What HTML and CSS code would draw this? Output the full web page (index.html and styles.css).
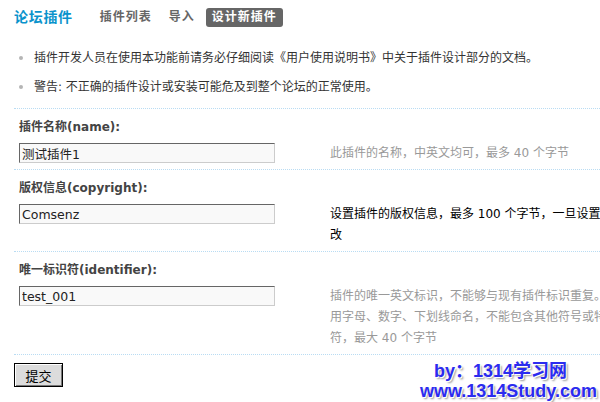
FILE: index.html
```html
<!DOCTYPE html>
<html lang="zh-CN">
<head>
<meta charset="utf-8">
<title>论坛插件</title>
<link rel="stylesheet" href="styles.css">
</head>
<body>
<div class="page">
  <div class="header">
    <h3 class="title">论坛插件</h3>
    <div class="tabs">
      <span class="tab">插件列表</span>
      <span class="tab">导入</span>
      <span class="tab active">设计新插件</span>
    </div>
  </div>
  <ul class="notes">
    <li>插件开发人员在使用本功能前请务必仔细阅读《用户使用说明书》中关于插件设计部分的文档。</li>
    <li>警告: 不正确的插件设计或安装可能危及到整个论坛的正常使用。</li>
  </ul>
  <div class="form">
    <div class="field">
      <div class="field-label">插件名称(name):</div>
      <div class="control"><input class="txt" type="text" value="测试插件1"></div>
      <div class="tip">此插件的名称，中英文均可，最多 40 个字节</div>
    </div>
    <div class="field">
      <div class="field-label">版权信息(copyright):</div>
      <div class="control"><input class="txt" type="text" value="Comsenz"></div>
      <div class="tip tip-dark">设置插件的版权信息，最多 100 个字节，一旦设置不可修改</div>
    </div>
    <div class="field">
      <div class="field-label">唯一标识符(identifier):</div>
      <div class="control"><input class="txt" type="text" value="test_001"></div>
      <div class="tip">插件的唯一英文标识，不能够与现有插件标识重复。可使用字母、数字、下划线命名，不能包含其他符号或特殊字符，最大 40 个字节</div>
    </div>
    <div class="submit-row">
      <button class="btn" type="button">提交</button>
    </div>
  </div>
</div>
<div class="watermark">
  <div class="wm-line1">by：1314学习网</div>
  <div class="wm-line2">www.1314Study.com</div>
</div>
</body>
</html>
```

FILE: styles.css
```css
html, body {
  margin: 0;
  padding: 0;
  overflow: hidden;
  background: #fff;
}
body {
  font-family: "DejaVu Sans", "Noto Sans CJK SC", sans-serif;
  font-size: 12px;
  color: #333;
  position: relative;
  height: 402px;
}
.page {
  padding-left: 14px;
  width: 624px;
}
.header {
  display: flex;
  align-items: center;
  height: 19px;
  margin-top: 8px;
}
.title {
  margin: 0 21px 0 0;
  font-size: 14px;
  font-weight: bold;
  color: #0a93cc;
  letter-spacing: 0.7px;
  line-height: 19px;
}
.tabs {
  display: flex;
  gap: 5px;
}
.tab {
  padding: 0 6px 0 6px;
  height: 19px;
  line-height: 19px;
  font-weight: bold;
  color: #666;
  letter-spacing: 1px;
  border-radius: 3px;
}
.tab.active {
  background: #666;
  color: #fff;
}
.notes {
  list-style: none;
  margin: 17px 0 6px 0;
  padding: 0;
}
.notes li {
  display: flex;
  align-items: center;
  line-height: 20px;
  padding: 4px 0 5px 0;
  color: #333;
  white-space: nowrap;
}
.notes li::before {
  content: "";
  flex: none;
  width: 4px;
  height: 4px;
  border-radius: 50%;
  background: #b5b5b5;
  margin: 0 11px 0 5px;
}
.field {
  display: grid;
  grid-template-columns: 316px 308px;
  border-top: 1px dotted #b9dcf3;
}
.field-label {
  grid-column: 1 / -1;
  padding: 9px 5px 0 5px;
  line-height: 18px;
  font-weight: bold;
  color: #444;
}
.control {
  padding: 7px 0 5px 5px;
}
.txt {
  display: block;
  box-sizing: border-box;
  width: 256px;
  height: 20px;
  margin: 0;
  padding: 0 2px;
  border: 1px solid;
  border-color: #666 #ccc #ccc #666;
  background: #f9f9f9;
  font-family: "DejaVu Sans", "Noto Sans CJK SC", sans-serif;
  font-size: 12.5px;
  color: #222;
}
.tip {
  padding: 7px 0 5px 0;
  line-height: 21px;
  color: #999;
}
.tip-dark {
  color: #000;
}
.submit-row {
  border-top: 1px dotted #b9dcf3;
  padding-top: 8px;
}
.btn {
  display: block;
  box-sizing: border-box;
  width: 49px;
  height: 24px;
  margin: 0;
  padding: 0;
  border: 1px solid #000;
  background: #dcdcdc;
  box-shadow: inset 1px 1px 0 #fff, inset -1px -1px 0 #777;
  font-family: "Noto Sans CJK SC", sans-serif;
  font-size: 13px;
  color: #000;
}
.watermark {
  position: absolute;
  right: 3px;
  bottom: 1px;
  text-align: right;
  font-family: "Liberation Sans", "Noto Sans CJK SC", sans-serif;
  font-weight: bold;
  font-size: 18px;
  line-height: 20px;
  color: #2b2bef;
  text-shadow: 1px 1px 0 #fff, 2px 2px 2px #999;
}
.wm-line1 {
  padding-right: 30px;
}
```
